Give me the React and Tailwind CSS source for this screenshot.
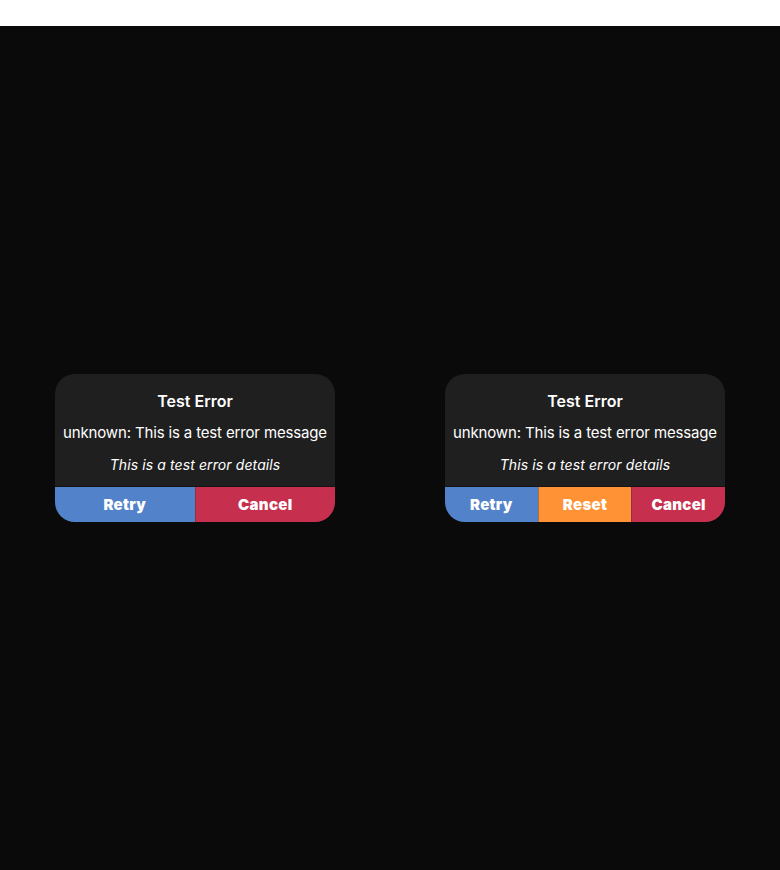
import React from "react";

function ErrorCard({ buttons }) {
  return (
    <div className="w-[280px] rounded-[20px] overflow-hidden bg-[#1f1f1f] text-white text-center" style={{ fontFamily: "Inter, 'Liberation Sans', sans-serif" }}>
      <div className="pt-[17px] pb-[11px] flex flex-col items-center">
        <div className="text-[16px] font-semibold leading-[20px]">Test Error</div>
        <div className="mt-[12px] text-[15px] leading-[20px] tracking-[-0.15px]">unknown: This is a test error message</div>
        <div className="mt-[12px] text-[14px] italic leading-[20px] tracking-[0.1px]">This is a test error details</div>
      </div>
      <div className="flex h-[36px] border-t border-[#141414]">
        {buttons.map((b, i) => (
          <div
            key={b.label}
            className={`flex-1 flex items-center justify-center pt-[1px] text-[15px] font-black tracking-[0.3px] ${b.bg} ${i > 0 ? "border-l border-[#3a3a3a]/40" : ""}`}
          >
            {b.label}
          </div>
        ))}
      </div>
    </div>
  );
}

export default function App() {
  return (
    <div className="w-full min-h-[870px] bg-white flex flex-col">
      <div className="h-[26px] bg-white" />
      <div className="flex-1 bg-[#0a0a0a] grid grid-cols-2 items-center justify-items-center">
        <ErrorCard
          buttons={[
            { label: "Retry", bg: "bg-[#5282c9]" },
            { label: "Cancel", bg: "bg-[#c62f4e]" },
          ]}
        />
        <ErrorCard
          buttons={[
            { label: "Retry", bg: "bg-[#5282c9]" },
            { label: "Reset", bg: "bg-[#fe9235]" },
            { label: "Cancel", bg: "bg-[#c62f4e]" },
          ]}
        />
      </div>
    </div>
  );
}
